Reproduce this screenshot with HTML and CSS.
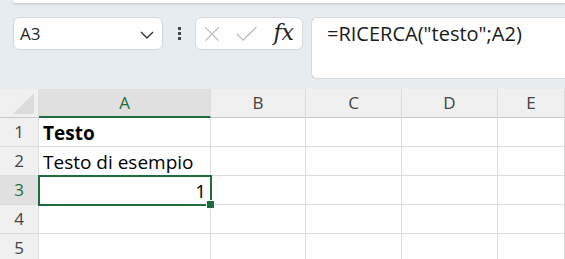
FILE: index.html
```html
<!DOCTYPE html>
<html lang="it">
<head>
    <meta charset="UTF-8">
    <title>Foglio</title>
    <link rel="stylesheet" href="styles.css">
</head>
<body>
    <div class="ribbon"></div>

    <div class="toolbar">
        <div class="namebox">
            <span>A3</span>
            <svg width="14" height="8" viewBox="0 0 14 8"><path d="M1 1 L7 7 L13 1" fill="none" stroke="#333" stroke-width="1.4"/></svg>
        </div>
        <div class="dots"><i></i><i></i><i></i></div>
        <div class="fbuttons">
            <svg width="18" height="18" viewBox="0 0 18 18"><path d="M1.5 1.5 L16.5 16.5 M16.5 1.5 L1.5 16.5" stroke="#b8b8b8" stroke-width="1.3"/></svg>
            <svg width="24" height="18" viewBox="0 0 24 18"><path d="M1 9 L8 16 L23 1" fill="none" stroke="#b8b8b8" stroke-width="1.3"/></svg>
            <span class="fx">fx</span>
        </div>
        <div class="formula">=RICERCA("testo";A2)</div>
    </div>

    <div class="sheet">
        <div class="corner"><svg width="22" height="21" viewBox="0 0 22 21"><path d="M21 0 L21 21 L0 21 Z" fill="#dcdcdc"/></svg></div>
        <div class="colhead active">A</div>
        <div class="colhead">B</div>
        <div class="colhead">C</div>
        <div class="colhead">D</div>
        <div class="colhead">E</div>

        <div class="rowhead">1</div>
        <div class="cell bold">Testo</div>
        <div class="cell"></div><div class="cell"></div><div class="cell"></div><div class="cell"></div>

        <div class="rowhead">2</div>
        <div class="cell">Testo di esempio</div>
        <div class="cell"></div><div class="cell"></div><div class="cell"></div><div class="cell"></div>

        <div class="rowhead active">3</div>
        <div class="cell num selected">1<span class="handle"></span></div>
        <div class="cell"></div><div class="cell"></div><div class="cell"></div><div class="cell"></div>

        <div class="rowhead">4</div>
        <div class="cell"></div><div class="cell"></div><div class="cell"></div><div class="cell"></div><div class="cell"></div>

        <div class="rowhead">5</div>
        <div class="cell"></div><div class="cell"></div><div class="cell"></div><div class="cell"></div><div class="cell"></div>
    </div>
</body>
</html>
```

FILE: styles.css
```css
body {
    margin: 0;
    background: #e6ecef;
    font-family: "Open Sans", "Noto Sans", sans-serif;
    color: #222;
    overflow: hidden;
}
.ribbon {
    margin-left: 13px;
    height: 3px;
    background: white;
    border-radius: 0 0 0 8px;
    box-shadow: 0 1px 3px rgba(0, 0, 0, 0.18);
}
.toolbar {
    display: flex;
    align-items: flex-start;
    padding: 14px 0 10px 13px;
    height: 62px;
}
.namebox {
    width: 150px;
    height: 33px;
    box-sizing: border-box;
    background: white;
    border: 1px solid #d4d8db;
    border-radius: 6px;
    display: flex;
    align-items: center;
    justify-content: space-between;
    padding: 0 8px 0 6px;
    font-size: 17px;
    color: #1f1f1f;
}
.namebox svg {
    margin-top: 2px;
}
.dots {
    width: 32px;
    height: 33px;
    display: flex;
    flex-direction: column;
    align-items: center;
    justify-content: center;
    gap: 2px;
}
.dots i {
    display: block;
    width: 3px;
    height: 3px;
    background: #444;
}
.fbuttons {
    width: 108px;
    height: 33px;
    box-sizing: border-box;
    background: white;
    border: 1px solid #d4d8db;
    border-radius: 6px;
    display: flex;
    align-items: center;
    padding: 0 8px;
    gap: 16px;
}
.fx {
    font-family: "DejaVu Serif", serif;
    font-style: italic;
    font-size: 22px;
    color: #222;
    margin-top: -3px;
}
.formula {
    flex: 1;
    margin-left: 8px;
    height: 62px;
    box-sizing: border-box;
    background: white;
    border: 1px solid #d4d8db;
    border-right: none;
    border-radius: 6px 0 0 6px;
    padding: 2px 0 0 15px;
    font-size: 20px;
    color: #1a1a1a;
}
.sheet {
    display: grid;
    grid-template-columns: 39px 172px 95px 96px 96px 1fr;
    grid-template-rows: repeat(6, 29px);
    background: white;
}
.corner {
    background: #f0f0f0;
    border-bottom: 1px solid #c8c8c8;
    border-right: 1px solid #dcdcdc;
    display: flex;
    align-items: flex-end;
    justify-content: flex-end;
    padding: 0 3px 3px 0;
}
.colhead {
    background: #f0f0f0;
    border-bottom: 1px solid #c8c8c8;
    border-right: 1px solid #dcdcdc;
    font-size: 17px;
    color: #444;
    text-align: center;
    line-height: 28px;
}
.colhead.active {
    background: #e0e0e0;
    color: #1e6b40;
    border-bottom: 2px solid #1e6b40;
    line-height: 27px;
}
.rowhead {
    background: #f0f0f0;
    border-right: 1px solid #dcdcdc;
    border-bottom: 1px solid #dcdcdc;
    font-size: 17px;
    color: #444;
    text-align: center;
    line-height: 28px;
}
.rowhead.active {
    background: #e0e0e0;
    color: #1e6b40;
}
.cell {
    border-right: 1px solid #dcdcdc;
    border-bottom: 1px solid #dcdcdc;
    font-size: 19px;
    line-height: 26px;
    padding: 2px 4px 0;
    white-space: nowrap;
    color: #000;
}
.bold {
    font-weight: bold;
}
.num {
    text-align: right;
}
.selected {
    position: relative;
    outline: 2px solid #1e6b40;
    outline-offset: -1px;
    z-index: 1;
}
.handle {
    position: absolute;
    right: -4px;
    bottom: -4px;
    width: 7px;
    height: 7px;
    background: #1e6b40;
    border: 1px solid white;
    margin: -1px;
}
```
